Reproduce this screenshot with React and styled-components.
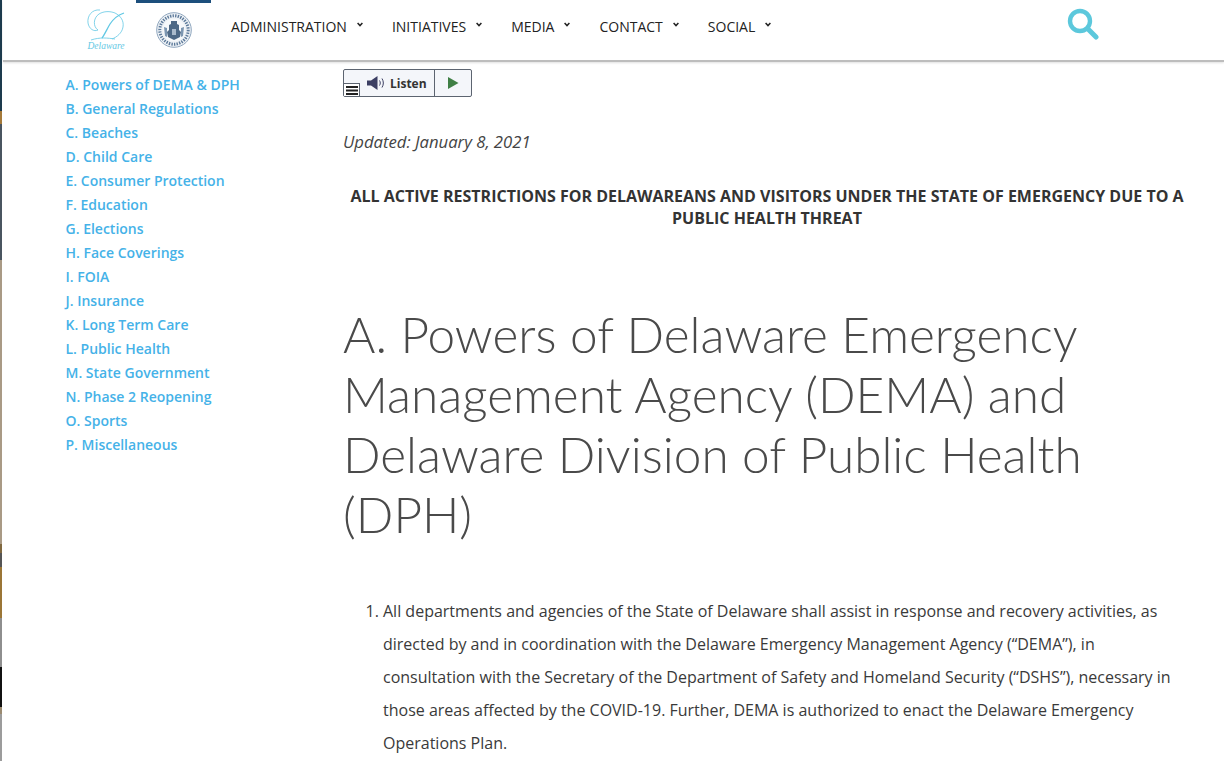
import React from "react";
import styled, { createGlobalStyle } from "styled-components";

const Global = createGlobalStyle`
  html, body { margin: 0; padding: 0; background: #fff; overflow: hidden; }
  body { font-family: "Open Sans", "Liberation Sans", sans-serif; color: #333; }
`;
const Page = styled.div`
  display: flex;
  width: 1224px;
  height: 761px;
  overflow: hidden;
`;
const EdgeStrip = styled.div`
  width: 2px;
  flex: none;
  display: flex;
  flex-direction: column;
`;
const EdgeSegment = styled.div`
  height: ${(p) => p.$h}px;
  background: ${(p) => p.$c};
`;
const Main = styled.div`
  flex: 1;
  min-width: 0;
  padding-left: 1px;
`;
const Header = styled.header`
  display: flex;
  align-items: flex-start;
  height: 60px;
  border-bottom: 2px solid #bdbdbd;
  box-shadow: 0 1px 2px rgba(0, 0, 0, 0.12);
  box-sizing: content-box;
  padding-left: 83px;
`;
const LogoSlot = styled.div`
  width: 50px;
  display: flex;
  padding-top: 8px;
`;
const SealSlot = styled.div`
  width: 75px;
  height: 57px;
  border-top: 3px solid #1c4f7c;
  display: flex;
  justify-content: center;
  padding-top: 9px;
  box-sizing: border-box;
`;
const Nav = styled.nav`
  display: flex;
  gap: 29px;
  margin-left: 20px;
  padding-top: 17px;
`;
const NavItem = styled.a`
  display: flex;
  align-items: flex-start;
  gap: 10px;
  font-size: 14px;
  line-height: 20px;
  color: #222;
`;
const Caret = styled.svg`
  width: 6px;
  height: 5px;
  margin-top: 5px;
`;
const SearchSlot = styled.div`
  margin-left: auto;
  margin-right: 125px;
  padding-top: 8px;
`;
const Body = styled.div`
  display: flex;
  align-items: flex-start;
`;
const Sidebar = styled.ul`
  list-style: none;
  margin: 0;
  padding: 11px 0 0 62.5px;
  width: 340px;
  flex: none;
  box-sizing: border-box;
`;
const SideItem = styled.li`
  font-size: 14px;
  line-height: 24px;
  font-weight: 600;
  color: #45b2e8;
  white-space: nowrap;
`;
const Content = styled.main`
  flex: 1;
  min-width: 0;
  padding: 7px 33px 0 0;
`;
const Listen = styled.div`
  display: flex;
  position: relative;
  width: 129px;
  height: 28px;
  box-sizing: border-box;
  border: 1px solid #5c6470;
  border-radius: 2px;
  background: #f4f6fa;
`;
const ListenMain = styled.div`
  width: 91px;
  display: flex;
  align-items: center;
  gap: 5px;
  padding-left: 23px;
  box-sizing: border-box;
  border-right: 1px solid #5c6470;
  font-size: 12px;
  font-weight: 700;
  color: #333;
`;
const ListenPlay = styled.div`
  flex: 1;
  display: flex;
  align-items: center;
  justify-content: center;
`;
const MenuBadge = styled.div`
  position: absolute;
  left: 0;
  bottom: 0;
  width: 16px;
  height: 13px;
  box-sizing: border-box;
  border-top: 1px solid #5c6470;
  border-right: 1px solid #5c6470;
  background: #fff;
  display: flex;
  align-items: center;
  justify-content: center;
`;
const Updated = styled.p`
  margin: 33px 0 0;
  font-size: 16.7px;
  line-height: 24px;
  font-style: italic;
  color: #444;
`;
const Notice = styled.p`
  margin: 31px 0 0;
  text-align: center;
  font-size: 16px;
  line-height: 22px;
  font-weight: 700;
  color: #333;
`;
const Title = styled.h1`
  margin: 75px 0 0;
  font-family: Lato, "Open Sans", sans-serif;
  font-size: 49.5px;
  line-height: 60px;
  font-weight: 300;
  color: #4a4a4a;
`;
const List = styled.ol`
  margin: 51px 0 0;
  padding: 0 0 0 40px;
`;
const ListItem = styled.li`
  font-size: 16px;
  line-height: 33px;
  color: #3a3a3a;
`;

const strip = [
  [111, "#1d3b4e"], [13, "#a57a3a"], [136, "#4a5560"], [284, "#a99a85"],
  [9, "#80683f"], [14, "#555"], [51, "#9b7636"], [49, "#8e8e8e"], [40, "#111"], [7, "#9a8a70"], [47, "#9c9c9c"],
];
const topics = [
  "A. Powers of DEMA & DPH", "B. General Regulations", "C. Beaches", "D. Child Care",
  "E. Consumer Protection", "F. Education", "G. Elections", "H. Face Coverings", "I. FOIA",
  "J. Insurance", "K. Long Term Care", "L. Public Health", "M. State Government",
  "N. Phase 2 Reopening", "O. Sports", "P. Miscellaneous",
];
const navs = ["ADMINISTRATION", "INITIATIVES", "MEDIA", "CONTACT", "SOCIAL"];

const DelawareLogo = () => (
  <svg width="40" height="44" viewBox="0 0 40 44" fill="none" stroke="#62c8e4" strokeWidth="0.8">
    <path d="M14 2C6 1 1 8 2 15c1 6 6 9 10 7" />
    <path d="M12 22C7 19 7 10 13 6c5-3 11-3 16-1 6 3 9 8 8 14-1 6-6 10-11 12" />
    <path d="M38 5c-6 2-10 5-14 11-3 5-5 10-8 14" strokeWidth="1.3" />
    <path d="M5 32c9-3 17-2 24-1" />
    <text x="20" y="41" textAnchor="middle" fontFamily="Liberation Serif, serif" fontStyle="italic" fontSize="9.5" fill="#62c8e4" stroke="none">Delaware</text>
  </svg>
);
const Seal = () => (
  <svg width="36" height="36" viewBox="0 0 36 36">
    <circle cx="18" cy="18" r="17.3" fill="#eef2f6" stroke="#8fa6be" strokeWidth="1" />
    <circle cx="18" cy="18" r="14.2" fill="none" stroke="#5d7a9a" strokeWidth="3" strokeDasharray="1.4 1.2" />
    <circle cx="18" cy="18" r="11.2" fill="#f6f8fa" />
    <path d="M15 9h6v3l2 1v5l2 2-1 5-6 3-6-3-1-5 2-2v-5l2-1z" fill="#4d6885" />
    <path d="M8 15l3 1v9l-2-1zM28 15l-3 1v9l2-1z" fill="#7c96b1" />
    <path d="M16 17h4v6h-4z" fill="#a9bacb" />
  </svg>
);
const CaretIcon = () => (
  <Caret viewBox="0 0 6 5" fill="none" stroke="#222" strokeWidth="1.5">
    <path d="M.6 1l2.4 2.6L5.4 1" />
  </Caret>
);
const SearchIcon = () => (
  <svg width="32" height="32" viewBox="0 0 32 32" fill="none" stroke="#5cc8dc">
    <circle cx="13" cy="13" r="10" strokeWidth="4.4" />
    <path d="M21 21l8 8" strokeWidth="5" strokeLinecap="round" />
  </svg>
);
const Speaker = () => (
  <svg width="18" height="14" viewBox="0 0 18 14" fill="#3c3f63">
    <path d="M0 4.5h4L10.5 0v14L4 9.5H0z" />
    <path d="M12.5 4.5c1 1.6 1 3.4 0 5M15 2.5c1.8 3 1.8 6 0 9" fill="none" stroke="#3c3f63" strokeWidth="1" />
  </svg>
);
const Play = () => (
  <svg width="12" height="12" viewBox="0 0 12 12"><path d="M1 0l10.5 6L1 12z" fill="#3f7f45" /></svg>
);
const Burger = () => (
  <svg width="12" height="9" viewBox="0 0 12 9"><path d="M0 0h12v2H0zM0 3.5h12v2H0zM0 7h12v2H0z" fill="#222" /></svg>
);

export default function App() {
  return (
    <Page>
      <Global />
      <EdgeStrip>
        {strip.map(([h, c], i) => <EdgeSegment key={i} $h={h} $c={c} />)}
      </EdgeStrip>
      <Main>
        <Header>
          <LogoSlot><DelawareLogo /></LogoSlot>
          <SealSlot><Seal /></SealSlot>
          <Nav>
            {navs.map((n) => <NavItem key={n}>{n}<CaretIcon /></NavItem>)}
          </Nav>
          <SearchSlot><SearchIcon /></SearchSlot>
        </Header>
        <Body>
          <Sidebar>
            {topics.map((t) => <SideItem key={t}>{t}</SideItem>)}
          </Sidebar>
          <Content>
            <Listen>
              <ListenMain><Speaker />Listen</ListenMain>
              <ListenPlay><Play /></ListenPlay>
              <MenuBadge><Burger /></MenuBadge>
            </Listen>
            <Updated>Updated: January 8, 2021</Updated>
            <Notice>ALL ACTIVE RESTRICTIONS FOR DELAWAREANS AND VISITORS UNDER THE STATE OF EMERGENCY DUE TO A PUBLIC HEALTH THREAT</Notice>
            <Title>A. Powers of Delaware Emergency Management Agency (DEMA) and Delaware Division of Public Health (DPH)</Title>
            <List>
              <ListItem>All departments and agencies of the State of Delaware shall assist in response and recovery activities, as directed by and in coordination with the Delaware Emergency Management Agency (“DEMA”), in consultation with the Secretary of the Department of Safety and Homeland Security (“DSHS”), necessary in those areas affected by the COVID-19. Further, DEMA is authorized to enact the Delaware Emergency Operations Plan.</ListItem>
            </List>
          </Content>
        </Body>
      </Main>
    </Page>
  );
}
